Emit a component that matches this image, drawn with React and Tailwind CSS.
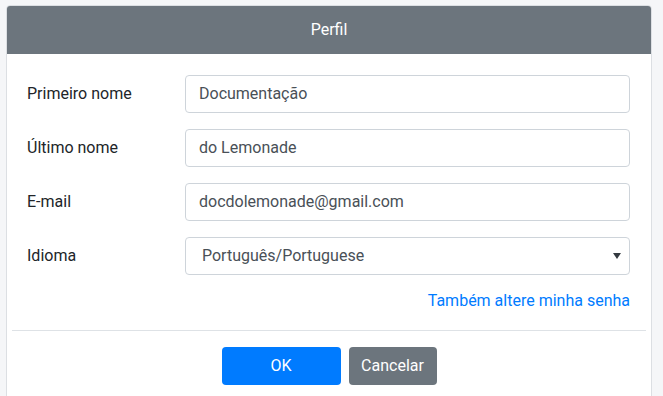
export default function App() {
  const fields = [
    { label: 'Primeiro nome', value: 'Documentação' },
    { label: 'Último nome', value: 'do Lemonade' },
    { label: 'E-mail', value: 'docdolemonade@gmail.com' },
  ];

  return (
    <div className="h-[396px] w-[663px] overflow-hidden bg-[#f5f6f8] pt-[5px] pl-[6px] font-['Roboto',sans-serif]">
      <div className="w-[646px] h-[400px] bg-white border border-[#dcdfe3] rounded-t-[4px] overflow-hidden">
        {/* Header */}
        <div className="h-[48px] bg-[#6c757d] flex items-center justify-center text-white text-[16px]">
          Perfil
        </div>

        {/* Body */}
        <div className="pt-[21px] pl-[20px] pr-[21px]">
          <div className="flex flex-col gap-[16px]">
            {fields.map((f) => (
              <div key={f.label} className="flex items-center">
                <label className="w-[158px] text-[16px] text-[#212529]">{f.label}</label>
                <div className="flex-1 h-[38px] border border-[#ced4da] rounded-[4px] px-[13px] flex items-center text-[16px] text-[#495057]">
                  {f.value}
                </div>
              </div>
            ))}
            <div className="flex items-center">
              <label className="w-[158px] text-[16px] text-[#212529]">Idioma</label>
              <div className="flex-1 h-[38px] border border-[#ced4da] rounded-[4px] pl-[16px] pr-[8px] flex items-center justify-between text-[16px] text-[#495057]">
                <span>Português/Portuguese</span>
                <svg width="8" height="6" viewBox="0 0 8 6">
                  <path d="M0 0h8L4 6z" fill="#343a40" />
                </svg>
              </div>
            </div>
          </div>
          <div className="flex justify-end mt-[14px]">
            <span className="text-[16px] text-[#007bff]">Também altere minha senha</span>
          </div>
        </div>

        {/* Footer */}
        <div className="mx-[5px] mt-[17px] border-t border-[#dee2e6]" />
        <div className="flex justify-center gap-[8px] pt-[16px]">
          <button className="w-[119px] h-[38px] rounded-[4px] bg-[#007bff] text-white text-[16px]">OK</button>
          <button className="w-[88px] h-[38px] rounded-[4px] bg-[#6c757d] text-white text-[16px]">Cancelar</button>
        </div>
      </div>
    </div>
  );
}
